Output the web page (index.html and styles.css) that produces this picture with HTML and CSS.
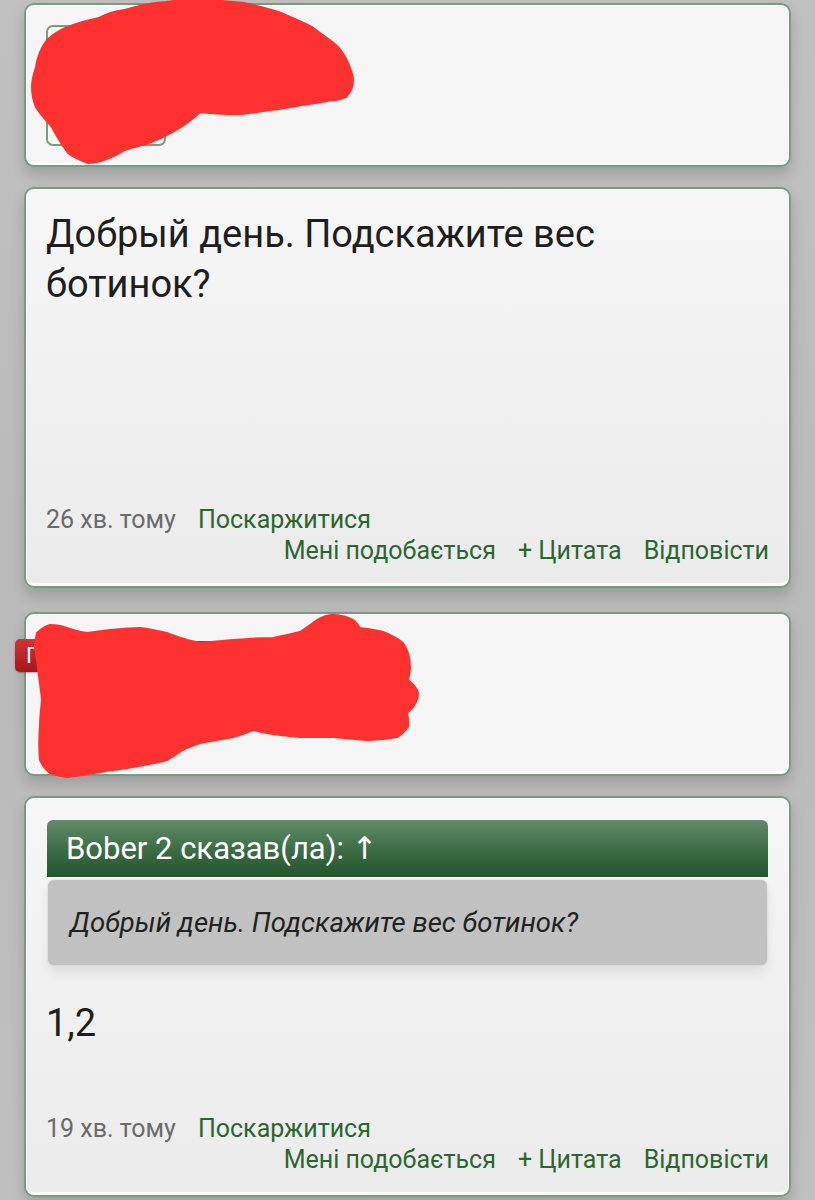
FILE: index.html
```html
<!DOCTYPE html>
<html lang="uk">
<head>
<meta charset="utf-8">
<title>Forum</title>
<link rel="stylesheet" href="styles.css">
</head>
<body>
<div class="page">
  <div class="card card-short">
    <div class="avatar"></div>
  </div>

  <div class="card post post-first">
    <p class="post-text">Добрый день. Подскажите вес ботинок?</p>
    <div class="post-footer">
      <div class="meta"><span class="time">26 хв. тому</span><a class="link">Поскаржитися</a></div>
      <div class="actions"><a class="link">Мені подобається</a><a class="link">+ Цитата</a><a class="link">Відповісти</a></div>
    </div>
  </div>

  <div class="card card-short">
    <span class="badge">П</span>
    <div class="user-row">
      <div class="avatar"></div>
      <div class="name-bar"></div>
    </div>
  </div>

  <div class="card post">
    <div class="quote">
      <div class="quote-head">Bober 2 сказав(ла): <span class="arrow">↑</span></div>
      <div class="quote-body">Добрый день. Подскажите вес ботинок?</div>
    </div>
    <p class="post-text answer">1,2</p>
    <div class="post-footer">
      <div class="meta"><span class="time">19 хв. тому</span><a class="link">Поскаржитися</a></div>
      <div class="actions"><a class="link">Мені подобається</a><a class="link">+ Цитата</a><a class="link">Відповісти</a></div>
    </div>
  </div>

  <svg class="scribbles" width="815" height="1200" viewBox="0 0 815 1200">
    <path d="M36,67 C38,52 44,44 47,40 C55,33 62,29 68,27 C80,22 90,20 99,18 C110,12 118,11 125,10 C140,5 152,3 166,2 C180,0 195,-1 208,0 C222,1 234,2 244,3 C258,6 270,9 281,13 C293,18 303,22 312,27 C322,35 331,40 338,47 C343,53 346,58 348,63 C351,70 353,75 353,80 C353,88 350,93 346,97 C341,99 337,100 333,100 C322,102 311,104 301,105 C290,107 280,109 270,110 C258,112 246,114 234,114 C222,114 210,113 200,112 C196,116 192,119 187,123 C177,130 166,136 156,140 C145,145 134,147 125,150 C117,155 110,158 104,160 C98,162 93,163 88,163 C80,160 73,157 68,153 C61,143 56,135 52,127 C46,120 40,114 36,107 C33,100 32,94 32,87 C32,80 34,73 36,67 Z"/>
    <path d="M37,633 C42,628 46,626 50,625 C56,625 62,626 67,628 C74,630 80,632 87,633 C95,632 102,631 110,630 C120,629 130,628 140,628 C150,629 158,631 167,633 C174,636 181,638 187,640 C192,641 196,642 200,643 C211,642 222,641 233,640 C246,639 260,638 273,638 C283,636 292,634 300,632 C306,628 312,624 317,620 C322,617 328,615 333,615 C340,615 347,617 353,620 C356,622 358,625 360,628 C368,629 376,630 383,632 C391,635 398,639 403,643 C408,650 410,658 410,667 C410,672 409,676 408,680 C413,684 417,688 418,693 C418,699 416,703 413,707 C411,709 409,711 407,713 C408,718 409,722 408,727 C405,731 401,735 397,737 C387,739 377,740 367,740 C356,739 344,738 333,737 C322,737 311,737 300,737 C289,736 278,735 267,733 C262,732 257,731 253,730 C246,733 240,735 233,737 C222,739 211,741 200,743 C194,745 188,747 183,750 C178,753 172,757 167,760 C156,763 144,765 133,767 C122,769 111,770 100,772 C89,774 78,776 67,777 C61,776 55,775 50,773 C45,769 42,765 40,760 C39,749 39,738 40,727 C40,718 41,709 42,700 C41,689 39,678 38,667 C37,660 36,653 35,647 C35,642 36,637 37,633 Z"/>
  </svg>
</div>
</body>
</html>
```

FILE: styles.css
```css
* { box-sizing: border-box; }

html, body {
  margin: 0;
  padding: 0;
  background: #bdbdbd;
}

body {
  font-family: Roboto, "Noto Sans", "Liberation Sans", sans-serif;
  color: #222;
}

.page {
  position: relative;
  width: 815px;
  height: 1200px;
  overflow: hidden;
  padding: 3px 24px 0;
  display: flex;
  flex-direction: column;
  gap: 20px;
  background: linear-gradient(180deg, #c0c0c0 0%, #bababa 50%, #bfbfbf 100%);
}

.card {
  position: relative;
  flex: none;
  border: 2px solid #789b81;
  border-radius: 10px;
  background: linear-gradient(180deg, #f6f6f6 0%, #ebebeb 100%);
  box-shadow: inset 0 0 0 1px #ffffff, inset 0 -3px 0 #fafafa, 0 8px 14px rgba(0, 0, 0, 0.16);
  padding: 20px;
}

.card-short {
  height: 164px;
  background: #f5f5f5;
}

.avatar {
  width: 120px;
  height: 121px;
  border: 2px solid #7a9a82;
  border-radius: 7px;
  background: #fbfbf6;
}

.user-row {
  display: flex;
  gap: 28px;
  align-items: flex-start;
}

.user-row .avatar {
  margin-top: 5px;
}

.name-bar {
  width: 40px;
  height: 20px;
  margin-top: 7px;
  border-radius: 4px;
  background: #2d5d31;
}

.badge {
  position: absolute;
  left: -11px;
  top: 25px;
  width: 44px;
  height: 33px;
  border-radius: 5px;
  background: linear-gradient(180deg, #d0333a 0%, #a9141c 100%);
  box-shadow: 0 1px 2px rgba(0, 0, 0, 0.3);
  color: #fff;
  font-size: 22px;
  line-height: 33px;
  padding-left: 11px;
}

.post {
  display: flex;
  flex-direction: column;
  height: 401px;
}

.post-first {
  margin-bottom: 4px;
}

.post-text {
  margin: 0;
  font-size: 38px;
  line-height: 50px;
  color: #1e1e1e;
  padding-right: 100px;
}

.post-footer {
  margin-top: auto;
  font-size: 25px;
  line-height: 31px;
}

.meta {
  display: flex;
  gap: 22px;
}

.time {
  color: #6a6a6a;
}

.link {
  color: #2b6630;
  text-decoration: none;
}

.actions {
  display: flex;
  justify-content: flex-end;
  gap: 22px;
}

.quote {
  margin: 2px 1px 0;
}

.quote-head {
  height: 57px;
  line-height: 57px;
  padding: 0 19px;
  font-size: 31px;
  color: #fff;
  border-radius: 6px 6px 0 0;
  background: linear-gradient(180deg, #628b6b 0%, #3e6e45 50%, #23542a 100%);
}

.arrow {
  font-family: "DejaVu Sans", sans-serif;
  font-size: 31px;
}

.quote-body {
  margin: 3px 1px 0;
  height: 85px;
  line-height: 85px;
  padding: 0 22px;
  font-size: 27.5px;
  font-style: italic;
  color: #222;
  background: #c1c1c1;
  border-radius: 6px;
  box-shadow: 0 0 2px rgba(0, 0, 0, 0.15), 0 8px 12px rgba(0, 0, 0, 0.08);
}

.answer {
  margin-top: 33px;
}

.scribbles {
  position: absolute;
  left: 0;
  top: 0;
  pointer-events: none;
}

.scribbles path {
  fill: #fe3131;
  stroke: #fe3131;
  stroke-width: 2;
  stroke-linejoin: round;
}
```
